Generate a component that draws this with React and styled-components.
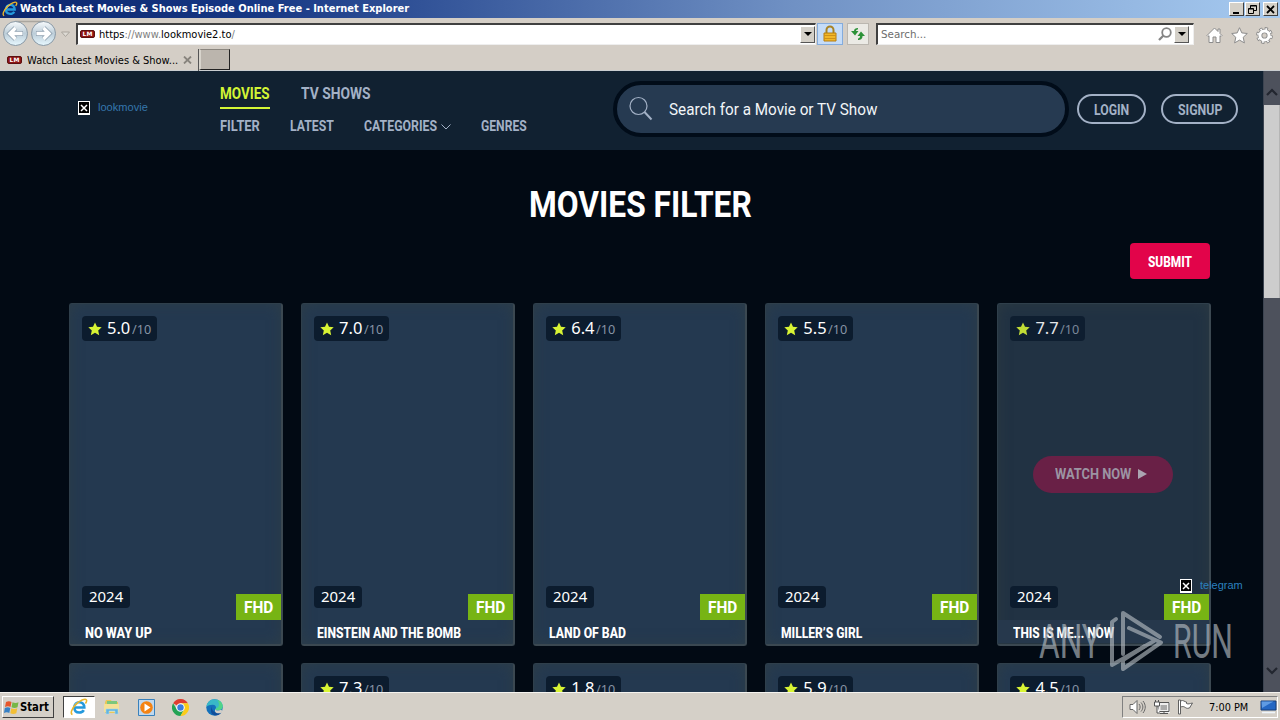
import React, { useLayoutEffect, useRef, useState } from 'react';
import styled, { createGlobalStyle } from 'styled-components';

const Global = createGlobalStyle`
  * { box-sizing: border-box; }
  html, body { margin: 0; padding: 0; overflow: hidden; background: #d4d0c8; }
  svg { display: block; flex: none; }
`;

const site = `Roboto, "Liberation Sans", sans-serif`;
const system = `"DejaVu Sans", "Liberation Sans", sans-serif`;

const FitBox = styled.span`
  display: block;
  flex: none;
  width: ${(p) => p.$w}px;
  white-space: nowrap;
`;
const FitInner = styled.span`
  display: inline-block;
  transform-origin: 0 50%;
`;
/* Condenses a label to a given width. */
function Fit({ w, children }) {
  const ref = useRef(null);
  const [scale, setScale] = useState(1);
  useLayoutEffect(() => {
    setScale(w / ref.current.offsetWidth);
  }, [w]);
  return (
    <FitBox $w={w}>
      <FitInner ref={ref} style={{ transform: `scaleX(${scale})` }}>{children}</FitInner>
    </FitBox>
  );
}

const Desktop = styled.div`
  width: 1280px;
  height: 720px;
  display: flex;
  flex-direction: column;
  overflow: hidden;
  font-family: ${system};
  font-size: 11px;
  color: #000;
`;

/* ---- browser window ---- */
const TitleBar = styled.div`
  height: 18px;
  flex: none;
  display: flex;
  align-items: center;
  padding: 0 2px 0 2px;
  gap: 2px;
  background: linear-gradient(90deg, #0b266e 0%, #163784 20%, #7091c4 62%, #a6caf0 100%);
  color: #fff;
  font-weight: 700;
  line-height: 18px;
`;
const Spacer = styled.div`flex: 1;`;
const WinButtons = styled.div`
  display: flex;
  gap: 1px;
`;
const WinButton = styled.div`
  width: 15px;
  height: 14px;
  margin-left: ${(p) => p.$gap || 0}px;
  background: #d4d0c8;
  border: 1px solid;
  border-color: #fff #404040 #404040 #fff;
  display: flex;
  align-items: center;
  justify-content: center;
`;
const Toolbar = styled.div`
  height: 31px;
  flex: none;
  display: flex;
  align-items: center;
  padding: 0 7px 0 3px;
  background: #d4cec6;
`;
const AddressBox = styled.div`
  width: 740px;
  height: 22px;
  margin-left: 5px;
  display: flex;
  align-items: center;
  padding-left: 2px;
  background: #fff;
  border: 1px solid;
  border-color: #404040 #eee #eee #404040;
  border-width: 2px 1px 1px 2px;
`;
const Gray = styled.span`color: #808080;`;
const LmIcon = styled.div`
  width: 15px;
  height: 8px;
  flex: none;
  margin-right: ${(p) => p.$gap || 4}px;
  background: #8e1512;
  border: 1px solid #5c1010;
  border-radius: 2px;
  color: #fff;
  font: 700 6px/6px "DejaVu Sans", sans-serif;
  text-align: center;
`;
const DropButton = styled.div`
  width: 15px;
  height: 17px;
  background: #d4d0c8;
  border: 1px solid;
  border-color: #fff #555 #555 #fff;
  display: flex;
  align-items: center;
  justify-content: center;
`;
const ToolButton = styled.div`
  width: ${(p) => p.$w}px;
  height: 22px;
  margin-left: ${(p) => p.$gap}px;
  display: flex;
  align-items: center;
  justify-content: center;
  background: ${(p) => p.$bg};
  border: 1px solid ${(p) => p.$line};
`;
const SearchBox = styled.div`
  width: 318px;
  height: 22px;
  margin-left: 7px;
  display: flex;
  align-items: center;
  padding: 0 4px 0 3px;
  background: #fff;
  color: #6d6d6d;
  border: 1px solid;
  border-color: #404040 #eee #eee #404040;
  border-width: 2px 1px 1px 2px;
`;
const ToolIcons = styled.div`
  display: flex;
  gap: 8px;
  margin-left: 12px;
  padding-top: 3px;
`;
const TabRow = styled.div`
  height: 22px;
  flex: none;
  display: flex;
  align-items: flex-start;
  background: #d4cec6;
  border-bottom: 1px solid #c9cdd0;
`;
const Tab = styled.div`
  width: 199px;
  height: 22px;
  display: flex;
  align-items: center;
  padding-left: 7px;
  border-right: 1px solid #555;
`;
const NewTab = styled.div`
  width: 31px;
  height: 21px;
  background: #bbb5ad;
  border: 1px solid;
  border-color: #8a857e #222 #222 #d8d4cc;
  border-width: 1px 1px 1px 2px;
`;

/* ---- site ---- */
const Viewport = styled.div`
  height: 621px;
  flex: none;
  display: flex;
  position: relative;
  overflow: hidden;
`;
const Page = styled.div`
  width: 1263px;
  height: 621px;
  background: #020a14;
  font-family: ${site};
  overflow: hidden;
`;
const Header = styled.header`
  height: 79px;
  display: flex;
  align-items: flex-start;
  background: #112131;
`;
const Logo = styled.div`
  width: 142px;
  height: 20px;
  margin: 26px 0 0 78px;
  display: flex;
  align-items: flex-start;
  gap: 8px;
  color: #3577ad;
  font: 11.5px/20px "Liberation Sans", sans-serif;
`;
const Broken = styled.div`
  width: 12px;
  height: 14px;
  margin-top: ${(p) => p.$top}px;
  flex: none;
  background: #000;
  border: 1px solid #fff;
  border-bottom-width: 2px;
  display: flex;
  align-items: center;
  justify-content: center;
`;
const Nav = styled.nav`
  width: 393px;
  display: flex;
  flex-direction: column;
  color: #a3b1c6;
  font-weight: 700;
`;
const NavMain = styled.div`
  display: flex;
  gap: 31px;
  height: 38px;
  padding-top: 11px;
  font-size: 17px;
  line-height: 22px;
`;
const MainLink = styled.div`
  height: 27px;
  color: ${(p) => (p.$active ? '#d3f535' : '#a3b1c6')};
  border-bottom: 2px solid ${(p) => (p.$active ? '#d3f535' : 'transparent')};
`;
const NavSub = styled.div`
  display: flex;
  align-items: center;
  height: 36px;
  gap: 30px;
  font-size: 14.5px;
  line-height: 20px;
`;
const WithArrow = styled.div`
  display: flex;
  align-items: center;
  gap: 4px;
`;
const Search = styled.div`
  width: 456px;
  height: 56px;
  margin-top: 10px;
  display: flex;
  align-items: center;
  padding-left: 11px;
  gap: 15px;
  border: 4px solid #010c19;
  border-radius: 28px;
  background: #263a51;
  color: #f2f5f8;
  font: 16px/24px Roboto, sans-serif;
`;
const SearchLabel = styled.div`
  padding-top: 1px;
`;
const Pill = styled.div`
  width: ${(p) => p.$w}px;
  height: 30px;
  margin: 23px 0 0 ${(p) => p.$gap}px;
  padding-top: 1px;
  display: flex;
  align-items: center;
  justify-content: center;
  border: 2px solid #a3b1c6;
  border-radius: 16px;
  color: #a3b1c6;
  font-size: 14px;
  font-weight: 700;
`;
const Heading = styled.h1`
  margin: 0;
  height: 93px;
  padding: 30px 0 0 529px;
  color: #fff;
  font-size: 37px;
  line-height: 50px;
  font-weight: 700;
`;
const FormRow = styled.div`
  height: 60px;
  padding-right: 53px;
  display: flex;
  justify-content: flex-end;
`;
const Submit = styled.div`
  width: 80px;
  height: 36px;
  padding-top: 2px;
  display: flex;
  align-items: center;
  justify-content: center;
  border-radius: 4px;
  background: #e2044a;
  color: #fff;
  font-size: 14px;
  font-weight: 800;
`;
const Grid = styled.div`
  display: grid;
  grid-template-columns: repeat(5, 214px);
  grid-auto-rows: 343px;
  gap: 17px 18.1px;
  padding-left: 69px;
`;
const Card = styled.div`
  display: flex;
  flex-direction: column;
  padding: 12px 0 0 12px;
  border: 1px solid;
  border-width: 1px 2px 2px 1px;
  border-color: #2f3f4b #3b4851 #3b4851 #2f3f4b;
  border-radius: 3px;
  background: ${(p) => (p.$hover ? '#213243' : '#243950')};
  box-shadow: inset 0 0 14px rgba(52, 66, 66, 0.55);
`;
const Rating = styled.div`
  width: 75px;
  height: 25px;
  display: flex;
  align-items: center;
  padding-left: 6px;
  gap: 5px;
  border-radius: 4px;
  background: #0c1c2e;
  color: #fff;
  font: 16.5px/23px "Noto Sans", sans-serif;
  opacity: ${(p) => (p.$hover ? 0.88 : 1)};
`;
const ScoreText = styled.div`
  height: 25px;
`;
const OutOf = styled.div`
  margin-left: -3px;
  padding-top: 2px;
  color: #8794a4;
  font-size: 12px;
`;
const Middle = styled.div`
  height: 245px;
  display: flex;
  padding: 115px 0 0 23px;
`;
const Watch = styled.div`
  width: 140px;
  height: 37px;
  display: flex;
  align-items: center;
  padding: 0 0 1px 22px;
  gap: 7px;
  border-radius: 19px;
  background: #692046;
  color: #9c94a3;
  font-size: 14px;
  font-weight: 700;
`;
const Meta = styled.div`
  height: 34px;
  display: flex;
  justify-content: space-between;
`;
const Year = styled.div`
  width: 48px;
  height: 22px;
  padding-left: 7px;
  border-radius: 4px;
  background: #0c1c2e;
  color: #fff;
  font: 14.5px/21px "Noto Sans", sans-serif;
`;
const Quality = styled.div`
  width: 45px;
  height: 26px;
  margin-top: 8px;
  padding-left: 8px;
  background: #77b414;
  color: #fff;
  font-size: 17px;
  line-height: 27px;
  font-weight: 700;
`;
const Name = styled.div`
  height: 23px;
  margin-left: -12px;
  padding-left: 15px;
  background: ${(p) => (p.$hover ? '#26384c' : 'transparent')};
  color: #fff;
  font-size: 14px;
  line-height: 26px;
  font-weight: 800;
`;
const Scrollbar = styled.div`
  width: 17px;
  display: flex;
  flex-direction: column;
  background: #4d515c;
  border-left: 1px solid #3c4451;
`;
const ScrollEnd = styled.div`
  height: 34px;
  display: flex;
  align-items: flex-end;
  justify-content: center;
  padding-bottom: ${(p) => p.$pad}px;
`;
const Thumb = styled.div`
  height: 193px;
  background: #cdcdcd;
  border-right: 1px solid #b5b5b5;
`;
const Telegram = styled.div`
  position: absolute;
  left: 1180px;
  top: 504px;
  display: flex;
  gap: 8px;
  color: #2b80bf;
  font: 11.5px/20px "Liberation Sans", sans-serif;
`;
const Watermark = styled.div`
  position: absolute;
  left: 1039px;
  top: 538px;
  display: flex;
  align-items: center;
  gap: 8px;
  color: #b9c0c6;
  opacity: 0.62;
  font: 400 49px/66px Roboto, sans-serif;
`;

/* ---- taskbar ---- */
const Taskbar = styled.div`
  height: 28px;
  flex: none;
  display: flex;
  align-items: center;
  padding: 1px 2px 0 2px;
  background: #d5d0c8;
  border-top: 1px solid #f5f3ef;
`;
const Start = styled.div`
  width: 52px;
  height: 22px;
  display: flex;
  align-items: center;
  padding-left: 1px;
  gap: 1px;
  border: 1px solid;
  border-color: #fff #404040 #404040 #fff;
  font-weight: 700;
  font-size: 11.5px;
`;
const Task = styled.div`
  width: ${(p) => (p.$active ? 32 : 34)}px;
  height: 22px;
  margin-left: ${(p) => (p.$active ? 9 : 0)}px;
  display: flex;
  align-items: center;
  justify-content: center;
  ${(p) => p.$active && `background: #fff; border: 1px solid; border-color: #404040 #fff #fff #404040;`}
`;
const Tray = styled.div`
  width: 156px;
  height: 22px;
  display: flex;
  align-items: center;
  padding-left: 6px;
  border: 1px solid;
  border-color: #808080 #fff #fff #808080;
`;
const TrayIcons = styled.div`
  display: flex;
  gap: 7px;
  width: 80px;
`;

const IE = ({ s = 16 }) => (
  <svg width={s} height={s} viewBox="0 0 16 16" fill="none">
    <path d="M3.800 8.500h8.900C12.600 5.400 10.800 3.800 8.300 3.800S3.900 5.700 3.900 8.600c0 2.700 1.800 4.300 4.400 4.300 1.800 0 3.100-.7 3.900-2.200" stroke="#2499dc" strokeWidth="2.300" />
    <path d="M4.200 7.500c.6-2 2-3.300 4-3.300" stroke="#9be0ff" strokeWidth="1.200" />
    <path d="M2.200 14.700C0 14 1.500 9.500 5 5.900 8.700 2.200 13.500.2 14.500 1.600c.6.8 0 2.200-.8 3.300" stroke="#e9b52b" strokeWidth="1.400" />
  </svg>
);
const Down = () => (
  <svg width="8" height="4" viewBox="0 0 8 4"><path d="M0 0h8L4 4z" fill="#000" /></svg>
);
const X = () => (
  <svg width="8" height="8" viewBox="0 0 8 8"><path d="M1 1l6 6M7 1L1 7" stroke="#fff" strokeWidth="1.500" /></svg>
);
const NavCircles = () => (
  <svg width="68" height="28" viewBox="0 0 68 28">
    <defs>
      <linearGradient id="nav" x2="0" y2="1"><stop stopColor="#f8fbfd" /><stop offset=".5" stopColor="#bccdd8" /><stop offset="1" stopColor="#e7f8ff" /></linearGradient>
    </defs>
    <path d="M12 1.500h29" fill="none" stroke="#aaa69f" strokeWidth="1.500" />
    <circle cx="12.500" cy="13.500" r="12" fill="url(#nav)" stroke="#8998a4" />
    <circle cx="40.500" cy="13.500" r="12" fill="url(#nav)" stroke="#8998a4" />
    <path d="M20 13.500H7M12.500 8L7 13.500l5.500 5.500M33 13.500h13M40.500 8l5.500 5.500-5.500 5.500" stroke="#8fa1b0" strokeWidth="5" fill="none" />
    <path d="M19.500 13.500H7M12.500 8L7 13.500l5.500 5.500M33.500 13.500H46M40.500 8l5.500 5.500-5.500 5.500" stroke="#fff" strokeWidth="3.400" fill="none" />
    <path d="M58.500 12h8l-4 4.500z" fill="#dedbd5" stroke="#aaa59d" />
  </svg>
);
const Star = () => (
  <svg width="14" height="14" viewBox="0 0 14 14"><path d="M7 .5l2 4.300 4.700.5-3.500 3.200 1 4.700L7 10.800l-4.200 2.400 1-4.700L.3 5.300 5 4.800z" fill="#d8f434" /></svg>
);

const movies = [
  ['5.0', 'NO WAY UP', 67],
  ['7.0', 'EINSTEIN AND THE BOMB', 144],
  ['6.4', 'LAND OF BAD', 77],
  ['5.5', 'MILLER’S GIRL', 81],
  ['7.7', 'THIS IS ME... NOW', 101],
];
const nextRow = [null, '7.3', '1.8', '5.9', '4.5'];

function Score({ value, hover }) {
  return (
    <Rating $hover={hover}>
      <Star />
      <ScoreText><Fit w={23}>{value}</Fit></ScoreText>
      <OutOf><Fit w={19}>/10</Fit></OutOf>
    </Rating>
  );
}

function MovieCard({ score, name, width, hover }) {
  return (
    <Card $hover={hover}>
      <Score value={score} hover={hover} />
      <Middle>
        {hover && (
          <Watch>
            <Fit w={76}>WATCH NOW</Fit>
            <svg width="9" height="10" viewBox="0 0 9 10"><path d="M0 0l9 5-9 5z" fill="#aba4b1" /></svg>
          </Watch>
        )}
      </Middle>
      <Meta>
        <Year><Fit w={34}>2024</Fit></Year>
        <Quality><Fit w={29}>FHD</Fit></Quality>
      </Meta>
      <Name $hover={hover}><Fit w={width}>{name}</Fit></Name>
    </Card>
  );
}

export default function App() {
  return (
    <Desktop>
      <Global />
      <TitleBar>
        <IE />
        <Fit w={389}>Watch Latest Movies &amp; Shows Episode Online Free - Internet Explorer</Fit>
        <Spacer />
        <WinButtons>
          <WinButton><svg width="9" height="9"><path d="M1 7h6v2H1z" /></svg></WinButton>
          <WinButton><svg width="9" height="9" viewBox="0 0 9 9" fill="none" stroke="#000"><path d="M2.500 3V.5h6v5H6M2.500 1h6M.5 3.500h5v5h-5zM.5 4h5" /></svg></WinButton>
          <WinButton $gap={2}><svg width="9" height="9" viewBox="0 0 9 9"><path d="M1 1l7 7M8 1L1 8" stroke="#000" strokeWidth="1.800" /></svg></WinButton>
        </WinButtons>
      </TitleBar>

      <Toolbar>
        <NavCircles />
        <AddressBox>
          <LmIcon>LM</LmIcon>
          <Fit w={136}>https<Gray>://www.</Gray>lookmovie2.to<Gray>/</Gray></Fit>
          <Spacer />
          <DropButton><Down /></DropButton>
        </AddressBox>
        <ToolButton $w={26} $gap={1} $bg="#c5dcf8" $line="#84acdd">
          <svg width="16" height="18" viewBox="0 0 16 18">
            <path d="M4.500 9V5a3.500 3.500 0 017 0v4" fill="none" stroke="#a88325" strokeWidth="2" />
            <path d="M2 8h12v8H2z" fill="#f1b729" stroke="#b57c10" />
            <path d="M2 10.500h12M2 13.500h12" stroke="#cf911a" />
          </svg>
        </ToolButton>
        <ToolButton $w={22} $gap={4} $bg="#ebeae5" $line="#bbb7b0">
          <svg width="16" height="14" viewBox="0 0 16 14" fill="#2c9238">
            <path d="M8 1C5.500 1 4 2 4 4H1l4 4.500L8.500 4H6c0-1 .6-1.600 2-1.600zM8 13c2.500 0 4.500-1 4.500-4H15l-4-4.500L7.500 9H10c0 1.500-.6 2.500-2 2.500z" />
          </svg>
        </ToolButton>
        <SearchBox>
          <Fit w={45}>Search...</Fit>
          <Spacer />
          <svg width="16" height="15" viewBox="0 0 16 15" fill="none" stroke="#858585"><circle cx="8.500" cy="5.500" r="4.300" strokeWidth="1.800" /><path d="M5.500 8.500L1 13" strokeWidth="2.300" /></svg>
          <DropButton><Down /></DropButton>
        </SearchBox>
        <ToolIcons>
          <svg width="17" height="17" viewBox="0 0 17 17" fill="#fff" stroke="#8c8c8c"><path d="M1 8.500L8.500 1 12 4.500V2h2v4.500l2 2-1 1-1-.8V15.500h-4V10H7v5.500H3V8.700l-1 .8z" /></svg>
          <svg width="17" height="17" viewBox="0 0 17 17" fill="#fff" stroke="#8c8c8c"><path d="M8.500.7l2.300 5.200 5.500.6-4.100 3.800 1.200 5.600-4.900-2.800-4.900 2.800 1.200-5.600L.7 6.500l5.500-.6z" /></svg>
          <svg width="17" height="17" viewBox="0 0 17 17" fill="none">
            <g stroke="#8c8c8c"><circle cx="8.500" cy="8.500" r="4.500" strokeWidth="4.600" /><circle cx="8.500" cy="8.500" r="6.900" strokeWidth="3" strokeDasharray="3.200 2.219" /></g>
            <g stroke="#fff"><circle cx="8.500" cy="8.500" r="4.600" strokeWidth="3" /><circle cx="8.500" cy="8.500" r="6.600" strokeWidth="2" strokeDasharray="1.600 3.584" strokeDashoffset="-.75" /></g>
          </svg>
        </ToolIcons>
      </Toolbar>

      <TabRow>
        <Tab>
          <LmIcon $gap={5}>LM</LmIcon>
          <Fit w={151}>Watch Latest Movies &amp; Show...</Fit>
          <svg width="15" height="8" viewBox="0 0 15 8"><path d="M6 .5l7 7M13 .5l-7 7" stroke="#88847d" strokeWidth="1.800" /></svg>
        </Tab>
        <NewTab />
      </TabRow>

      <Viewport>
        <Page>
          <Header>
            <Logo><Broken $top={4}><X /></Broken><Fit w={50}>lookmovie</Fit></Logo>
            <Nav>
              <NavMain>
                <MainLink $active><Fit w={50}>MOVIES</Fit></MainLink>
                <MainLink><Fit w={70}>TV SHOWS</Fit></MainLink>
              </NavMain>
              <NavSub>
                <Fit w={40}>FILTER</Fit>
                <Fit w={44}>LATEST</Fit>
                <WithArrow>
                  <Fit w={73}>CATEGORIES</Fit>
                  <svg width="10" height="6" viewBox="0 0 10 6"><path d="M.5.5L5 5 9.500.5" fill="none" stroke="#a3b1c6" /></svg>
                </WithArrow>
                <Fit w={46}>GENRES</Fit>
              </NavSub>
            </Nav>
            <Search>
              <svg width="26" height="26" viewBox="0 0 26 26" fill="none" stroke="#a3b1c6"><circle cx="10.500" cy="10" r="8.500" strokeWidth="1.200" /><path d="M16.500 16l7 7.500" strokeWidth="2" /></svg>
              <SearchLabel><Fit w={208}>Search for a Movie or TV Show</Fit></SearchLabel>
            </Search>
            <Pill $w={69} $gap={8}><Fit w={35}>LOGIN</Fit></Pill>
            <Pill $w={77} $gap={15}><Fit w={44}>SIGNUP</Fit></Pill>
          </Header>
          <Heading><Fit w={223}>MOVIES FILTER</Fit></Heading>
          <FormRow><Submit><Fit w={44}>SUBMIT</Fit></Submit></FormRow>
          <Grid>
            {movies.map(([score, name, width], i) => (
              <MovieCard key={name} score={score} name={name} width={width} hover={i === 4} />
            ))}
            {nextRow.map((score, i) => (
              <Card key={i}>{score && <Score value={score} />}</Card>
            ))}
          </Grid>
        </Page>
        <Scrollbar>
          <ScrollEnd $pad={9}>
            <svg width="12" height="8" viewBox="0 0 12 8"><path d="M1 7l5-5 5 5" fill="none" stroke="#22262f" strokeWidth="2.200" /></svg>
          </ScrollEnd>
          <Thumb />
          <Spacer />
          <ScrollEnd $pad={17}>
            <svg width="12" height="8" viewBox="0 0 12 8"><path d="M1 1l5 5 5-5" fill="none" stroke="#22262f" strokeWidth="2.200" /></svg>
          </ScrollEnd>
        </Scrollbar>
        <Watermark>
          <Fit w={62}>ANY</Fit>
          <svg width="56" height="64" viewBox="0 0 56 64" fill="none" stroke="#b9c0c6" strokeWidth="4" strokeLinejoin="round" strokeLinecap="round">
            <path d="M14 44V3l37 24" />
            <path d="M20 18l32 14.500L14 59v-9l22-14" />
            <path d="M7 9L3 12v43L45 31" />
          </svg>
          <Fit w={60}>RUN</Fit>
        </Watermark>
        <Telegram><Broken $top={4}><X /></Broken><Fit w={43}>telegram</Fit></Telegram>
      </Viewport>

      <Taskbar>
        <Start>
          <svg width="15" height="15" viewBox="0 0 15 15">
            <path d="M2 2c2-1.300 4-1 5.500 0L6.500 7C5 6 3 6 1 7z" fill="#e6562b" />
            <path d="M8.500 2.300c2 1 4 1 6 0l-1 5c-2 1-4 1-6 0z" fill="#76b746" />
            <path d="M.8 8c2-1 4-1 5.500 0l-1 5C4 12 1.500 12 0 13z" fill="#3680c5" />
            <path d="M7.300 8.300c2 1 4 1 6 0l-1 5c-2 1-4 1-6 0z" fill="#f3bf35" />
          </svg>
          <Fit w={29}>Start</Fit>
        </Start>
        <Task $active><IE s={18} /></Task>
        <Task>
          <svg width="18" height="18" viewBox="0 0 18 18">
            <path d="M2 4l1-2h5l1 2h6v11H2z" fill="#e9c759" /><path d="M4 3h10v4H4z" fill="#7bc77c" /><path d="M1 6h15v8H1z" fill="#f4e197" />
            <path d="M3 16v-5h12v5h-3v-3H6v3z" fill="#63b4df" stroke="#a5d9f1" strokeWidth=".6" />
          </svg>
        </Task>
        <Task>
          <svg width="17" height="17" viewBox="0 0 17 17"><path d="M.5.5h16v16H.5z" fill="#c0d8ee" stroke="#3981bc" /><circle cx="8.500" cy="8.500" r="6.300" fill="#f48313" /><path d="M6.500 4.500l6 4-6 4z" fill="#fff" /></svg>
        </Task>
        <Task>
          <svg width="17" height="17" viewBox="0 0 18 18">
            <path d="M9 9L1.200 4.500A9 9 0 0116.800 4.500H9z" fill="#de3d31" />
            <path d="M9 9l-3.900 2.200L1.200 4.500A9 9 0 009 18l3.900-6.800z" fill="#23a355" />
            <path d="M9 4.500h7.800A9 9 0 019 18l3.900-6.800z" fill="#fbcc1a" />
            <circle cx="9" cy="9" r="4.500" fill="#fff" /><circle cx="9" cy="9" r="3.400" fill="#3b7de0" />
          </svg>
        </Task>
        <Task>
          <svg width="17" height="17" viewBox="0 0 18 18">
            <circle cx="9" cy="9" r="8.700" fill="#1470ba" />
            <path d="M.5 8C1 3 5 .3 9 .3c5 0 8.700 3.300 8.700 7.200 0 3-2 4.500-5 4.500-2 0-3-.7-2.300-2 .8-2-.5-4-3.400-4C4 6 2 7 .5 8z" fill="#39b8c7" />
            <path d="M12 1c3.700 1 5.700 3.700 5.700 6.500 0 3-2 4.500-5 4.500-2 0-3-.7-2.300-2C14 9 15 5 12 1z" fill="#50d488" />
            <path d="M6.500 7.500C5 12 9 15.500 15.500 14.200c.5 0 .8.300.2.900C11 20 2 17 6.500 7.500z" fill="#104e9b" />
            <path d="M10.300 10c-1 2 2 3 6 1.500l1 1.500-2 2c-5 1-7-2-5-5z" fill="#d5d0c8" />
          </svg>
        </Task>
        <Spacer />
        <Tray>
          <TrayIcons>
            <svg width="17" height="16" viewBox="0 0 17 16" fill="none" stroke="#676767"><path d="M1 5.500h3l4-4v13l-4-4H1z" fill="#fff" /><path d="M10 5c1.500 2 1.500 4 0 6M12 3.500c2.500 3 2.500 6 0 9M14 2c3 4 3 8 0 12" /></svg>
            <svg width="17" height="16" viewBox="0 0 17 16" fill="none" stroke="#555"><path d="M6 4.500h9.500v8H6z" fill="#aaa" stroke="#eee" strokeWidth="3" /><path d="M5 3.500h11v9H5zM7 14.500h8M11 12v3" /><path d="M1.500 3h5v4h-5zM2.500 1v2M5.500 1v2M4 7v7h3" fill="#fff" /></svg>
            <svg width="17" height="16" viewBox="0 0 17 16" fill="#fff" stroke="#606060"><path d="M1.500 1h2v14h-2zM3.500 2c3-1.500 4 1 6 1v1.500c2 1 3 0 6-.5l-3 5c-3 1-4-.5-5-1-1-.6-2-.6-4 0z" /></svg>
          </TrayIcons>
          <Fit w={39}>7:00 PM</Fit>
          <Spacer />
          <svg width="17" height="14" viewBox="0 0 17 14"><path d="M1 1h15v9H1z" fill="#2467c3" stroke="#163f78" /><path d="M1.500 1.500h12L2 8z" fill="#5f9be3" /><path d="M2 12.500h13" stroke="#eef4fa" strokeWidth="1.600" /></svg>
        </Tray>
      </Taskbar>
    </Desktop>
  );
}
